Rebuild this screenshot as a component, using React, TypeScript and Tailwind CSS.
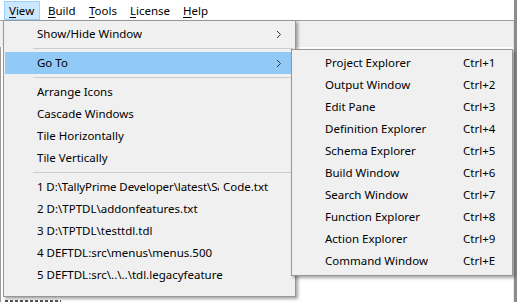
import React from "react";

const Chevron = () => (
  <svg width="6" height="9" viewBox="0 0 6 9" className="block">
    <polyline points="1,1 4.5,4.5 1,8" fill="none" stroke="#333" strokeWidth="1" />
  </svg>
);

const U = ({ c }: { c: string }) => <span className="underline underline-offset-[2px]">{c}</span>;

const Row = ({ children, hl, chev }: { children: React.ReactNode; hl?: boolean; chev?: boolean }) => (
  <div className={`h-[22px] mx-[1px] flex items-center pl-[32px] pr-[12px] ${hl ? "bg-[#91c9f7]" : ""}`}>
    <div className="flex-1 whitespace-nowrap">{children}</div>
    {chev && <Chevron />}
  </div>
);

const Sep = () => (
  <div className="h-[7px] flex items-center pl-[29px] pr-[2px]">
    <div className="h-px w-full bg-[#cdcdcd]" />
  </div>
);

const sub: [string, string][] = [
  ["Project Explorer", "Ctrl+1"],
  ["Output Window", "Ctrl+2"],
  ["Edit Pane", "Ctrl+3"],
  ["Definition Explorer", "Ctrl+4"],
  ["Schema Explorer", "Ctrl+5"],
  ["Build Window", "Ctrl+6"],
  ["Search Window", "Ctrl+7"],
  ["Function Explorer", "Ctrl+8"],
  ["Action Explorer", "Ctrl+9"],
  ["Command Window", "Ctrl+E"],
];

export default function App() {
  return (
    <div className="relative w-[517px] h-[302px] bg-white overflow-hidden text-[11.5px] text-black font-['Segoe_UI','Noto_Sans',sans-serif]">
      <div className="flex flex-col h-full border-r-[3px] border-[#8c8c8c]">
        {/* menu bar */}
        <div className="h-[20px] flex items-stretch pt-[1px] pl-[4px] gap-[3px] bg-white">
          <div className="w-[36px] h-[19px] border border-[#99d1ff] bg-[#cce8ff] pl-[4px] flex items-center"><span><U c="V" />iew</span></div>
          <div className="w-[38px] h-[19px] border border-transparent pl-[4px] flex items-center"><span><U c="B" />uild</span></div>
          <div className="w-[38px] h-[19px] border border-transparent pl-[4px] flex items-center"><span><U c="T" />ools</span></div>
          <div className="w-[50px] h-[19px] border border-transparent pl-[4px] flex items-center"><span><U c="L" />icense</span></div>
          <div className="w-[36px] h-[19px] border border-transparent pl-[4px] flex items-center"><span><U c="H" />elp</span></div>
        </div>
        <div className="h-px bg-[#a0a0a0]" />
        {/* toolbar strip */}
        <div className="h-[26px] bg-[#f0f0f0] border-r border-[#e0e0e0]" />
        {/* content */}
        <div className="flex-1 bg-white border-l border-[#9a9a9a] border-r border-r-[#e8e8e8] flex flex-col justify-end">
          <div className="h-[4px] overflow-hidden pl-[4px]">
            <div className="h-[2px] w-[56px] mt-[2px] bg-[repeating-linear-gradient(90deg,#555_0_3px,transparent_3px_5px)]" />
          </div>
        </div>
      </div>

      {/* View dropdown */}
      <div className="absolute left-[3px] top-[20px] w-[293px] h-[277px] bg-[#f0f0f0] border border-[#979797] shadow-[2px_2px_3px_rgba(0,0,0,0.35)] pt-[2px]">
        <Row chev>Show/Hide Window</Row>
        <Sep />
        <Row hl chev>Go To</Row>
        <Sep />
        <Row>Arrange Icons</Row>
        <Row>Cascade Windows</Row>
        <Row>Tile Horizontally</Row>
        <Row>Tile Vertically</Row>
        <Sep />
        <div className="h-[22px] mx-[1px] flex items-center pl-[32px] whitespace-nowrap">
          <span className="w-[182px] overflow-hidden tracking-[-0.1px]">1 D:\TallyPrime Developer\latest\Sample</span>
          <span className="ml-[4px]">Code.txt</span>
        </div>
        <Row>2 D:\TPTDL\addonfeatures.txt</Row>
        <Row>3 D:\TPTDL\testtdl.tdl</Row>
        <Row>4 DEFTDL:src\menus\menus.500</Row>
        <Row>5 DEFTDL:src\..\..\tdl.legacyfeature</Row>
      </div>

      {/* Go To submenu */}
      <div className="absolute left-[291px] top-[49px] w-[222px] h-[227px] bg-[#f0f0f0] border border-[#979797] shadow-[2px_2px_3px_rgba(0,0,0,0.35)] pt-[2px]">
        {sub.map(([a, b]) => (
          <div key={a} className="h-[22px] flex items-center pl-[33px] whitespace-nowrap">
            <span className="w-[138px]">{a}</span>
            <span>{b}</span>
          </div>
        ))}
      </div>
    </div>
  );
}
